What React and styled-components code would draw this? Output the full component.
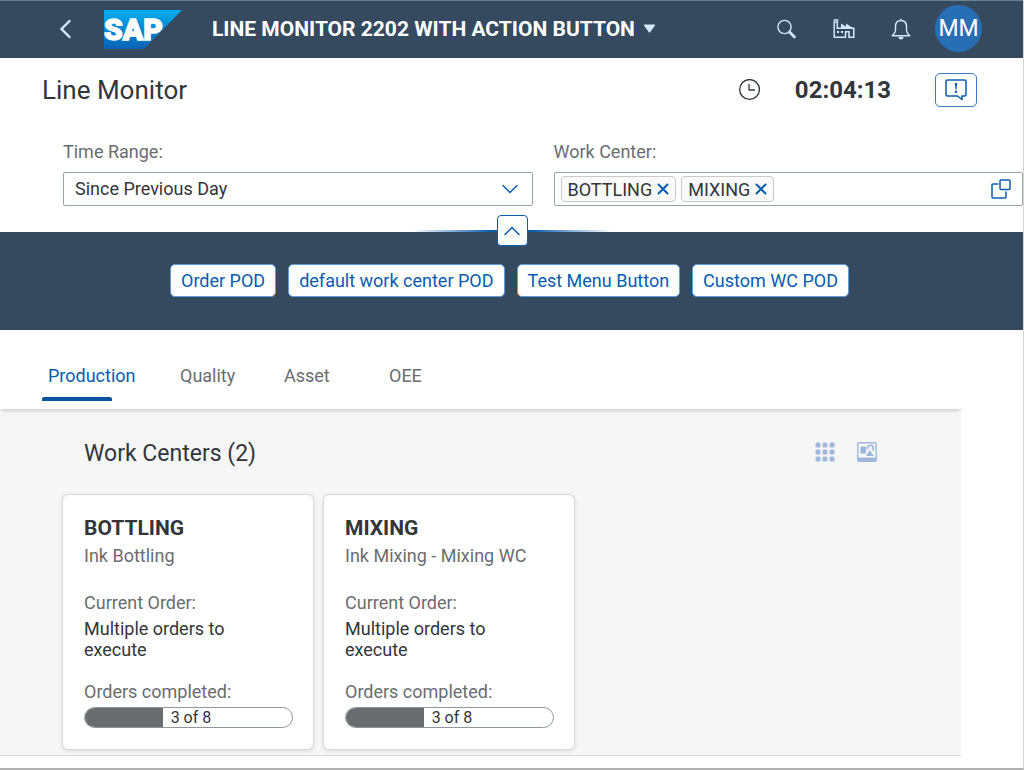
import React, { useState } from 'react'
import styled, { createGlobalStyle, css } from 'styled-components'

const GlobalStyle = createGlobalStyle`
  * {
    box-sizing: border-box;
  }
  body {
    margin: 0;
    background: #fff;
    color: #32363a;
    font-family: Roboto, "Liberation Sans", sans-serif;
    font-size: 18px;
    line-height: 21px;
  }
  button, select, input {
    font: inherit;
    color: inherit;
    margin: 0;
  }
`

const Page = styled.div`
  min-height: 100vh;
  border-right: 1px solid #d5d5d5;
  border-bottom: 2px solid #b0b0b0;
`

const plainButton = css`
  display: flex;
  align-items: center;
  justify-content: center;
  padding: 0;
  border: 0;
  background: none;
  cursor: pointer;
`

// Shell bar

const Shell = styled.header`
  display: flex;
  align-items: center;
  justify-content: space-between;
  height: 58px;
  padding: 0 41px 2px 50px;
  border-top: 1px solid #6a8093;
  background: #354a5f;
  color: #d1e8ff;
`

const ShellGroup = styled.div`
  display: flex;
  align-items: center;
  gap: ${(props) => props.$gap};
`

const ShellButton = styled.button`
  ${plainButton}
  width: ${(props) => (props.$wide ? '45px' : '30px')};
  height: 36px;
`

const LogoLink = styled.a`
  display: flex;
  margin: 2px 6px 0 0;
`

const AppTitle = styled.button`
  ${plainButton}
  gap: 8px;
  color: #fff;
  font-size: 21px;
  line-height: 24px;
  font-weight: bold;
`

const Avatar = styled.button`
  ${plainButton}
  width: 47px;
  height: 47px;
  border-radius: 50%;
  background: #286eb4;
  color: #fff;
  font-size: 23px;
`

// Page title and filters

const TitleBar = styled.div`
  display: flex;
  align-items: center;
  justify-content: space-between;
  height: 64px;
  padding: 0 46px 0 42px;
`

const PageTitle = styled.h1`
  margin: 0;
  font-size: 26px;
  line-height: 30px;
  font-weight: normal;
`

const Status = styled.div`
  display: flex;
  align-items: center;
`

const Time = styled.time`
  margin: 0 44px 0 35px;
  font-size: 24px;
  line-height: 30px;
  font-weight: bold;
`

const AlertButton = styled.button`
  ${plainButton}
  width: 42px;
  height: 34px;
  border: 1px solid #3a7bc4;
  border-radius: 5px;
  color: #0a5cb0;
`

const Filters = styled.div`
  display: grid;
  grid-template-columns: repeat(2, minmax(0, 1fr));
  gap: 21px;
  padding: 19px 0 26px 63px;
`

const Field = styled.div`
  display: flex;
  flex-direction: column;
  gap: 10px;
`

const Label = styled.label`
  color: #6a6d70;
`

const fieldBox = css`
  width: 100%;
  height: 34px;
  border: 1px solid #98a1ac;
  border-radius: 2px;
  background: #fff;
`

const SelectWrap = styled.div`
  position: relative;
  color: #0a5cb0;

  svg {
    position: absolute;
    top: 12px;
    right: 14px;
    pointer-events: none;
  }
`

const Select = styled.select`
  ${fieldBox}
  padding: 0 40px 2px 11px;
  color: #32363a;
  appearance: none;
`

const MultiInput = styled.div`
  ${fieldBox}
  display: flex;
  align-items: center;
  gap: 5px;
  padding: 0 6px;
`

const Token = styled.span`
  display: flex;
  align-items: center;
  gap: 5px;
  height: 26px;
  padding: 0 6px;
  border: 1px solid #c9c9c9;
  border-radius: 4px;
  background: #fafafa;
`

const TokenInput = styled.input`
  flex: 1;
  min-width: 0;
  border: 0;
  outline: 0;
  background: none;
`

const IconButton = styled.button`
  ${plainButton}
  width: 30px;
  height: 30px;
  color: #0a5cb0;
`

const RemoveButton = styled.button`
  ${plainButton}
  color: #0a5cb0;
`

// Action band

const ActionBand = styled.section`
  position: relative;
  display: flex;
  justify-content: center;
  gap: 12px;
  padding: 32px 4px 33px 0;
  background: #354a5f;
`

const CollapseLine = styled.span`
  position: absolute;
  top: -2px;
  left: calc(50% - 100px);
  width: 200px;
  height: 2px;
  background: linear-gradient(to right, transparent, #0a5cb0 40%, #0a5cb0 60%, transparent);
`

const CollapseButton = styled.button`
  ${plainButton}
  position: absolute;
  top: -17px;
  left: calc(50% - 15px);
  width: 31px;
  height: 31px;
  border: 1px solid #0a5cb0;
  border-radius: 4px;
  background: #fff;
  color: #0a5cb0;
`

const ActionButton = styled.button`
  height: 33px;
  padding: 0 10px;
  border: 1px solid #5a9fe0;
  border-radius: 5px;
  background: #fff;
  color: #0a5cb0;
  cursor: pointer;
`

// Tabs

const Tabs = styled.nav`
  position: relative;
  display: grid;
  grid-template-columns: 138px 104px 105px 104px;
  height: 80px;
  margin-right: 62px;
  padding: 35px 0 0 42px;
  border-bottom: 1px solid #d9d9d9;
  box-shadow: 0 3px 3px -2px rgba(0, 0, 0, 0.16);
`

const Tab = styled.button`
  display: flex;
  flex-direction: column;
  align-items: flex-start;
  gap: 11px;
  height: 36px;
  padding: 0;
  border: 0;
  background: none;
  color: ${(props) => (props.$active ? '#0a5cb0' : '#6a6d70')};
  cursor: pointer;

  span {
    padding-left: ${(props) => (props.$first ? '6px' : '0')};
  }

  &::after {
    content: "";
    width: 70px;
    height: 4px;
    border-radius: 2px 2px 0 0;
    background: ${(props) => (props.$active ? '#0854a0' : 'transparent')};
  }
`

// Work centers

const Panel = styled.main`
  margin-right: 62px;
  padding: 25px 84px 5px 62px;
  border-bottom: 1px solid #d9d9d9;
  background: #f6f6f6;
`

const PanelHead = styled.div`
  display: flex;
  align-items: center;
  justify-content: space-between;
  height: 34px;
  margin-bottom: 25px;
  padding-left: 22px;
`

const PanelTitle = styled.h2`
  margin: 0;
  padding-top: 3px;
  font-size: 23px;
  line-height: 28px;
  font-weight: normal;
`

const ViewButtons = styled.div`
  display: flex;
  gap: 22px;
`

const ViewButton = styled.button`
  ${plainButton}
  width: 20px;
  height: 20px;
  color: #9db8dc;
`

const Cards = styled.div`
  display: flex;
  flex-wrap: wrap;
  gap: 9px;
`

const Card = styled.article`
  width: 252px;
  padding: 21px 20px 21px 21px;
  border: 1px solid #d9d9d9;
  border-radius: 6px;
  background: #fff;
  box-shadow: 0 1px 4px rgba(0, 0, 0, 0.12);
`

const CardTitle = styled.h3`
  margin: 0 0 5px;
  font-size: 21px;
  line-height: 24px;
  font-weight: bold;
`

const Muted = styled.p`
  margin: 0 0 ${(props) => props.$space};
  color: #6a6d70;
`

const Value = styled.p`
  max-width: 180px;
  margin: 0 0 21px;
`

const Track = styled.div`
  display: flex;
  align-items: center;
  height: 21px;
  overflow: hidden;
  border: 1px solid #8f969d;
  border-radius: 11px;
  font-size: 16px;
  line-height: 19px;
`

const Fill = styled.div`
  height: 21px;
  margin-right: 8px;
  background: #6a6d70;
`

const LineIcon = ({ size = 20, width = 1.5, children }) => (
  <svg width={size} height={size} viewBox="0 0 20 20" fill="none" stroke="currentColor"
    strokeWidth={width} strokeLinecap="round" strokeLinejoin="round" aria-hidden="true">
    {children}
  </svg>
)

const Chevron = ({ up }) => (
  <svg width="18" height="10" viewBox="0 0 18 10" fill="none" stroke="currentColor"
    strokeWidth="1.5" strokeLinecap="round" aria-hidden="true">
    <path d={up ? 'M2 8.5 9 1.5 16 8.5' : 'M2 1.5 9 8.5 16 1.5'} />
  </svg>
)

const SapLogo = () => (
  <svg width="78" height="39" viewBox="0 0 78 39" role="img" aria-label="SAP">
    <defs>
      <linearGradient id="sap" x1="0" y1="0" x2="0" y2="1">
        <stop offset="0" stopColor="#00aeef" />
        <stop offset="1" stopColor="#0a62b5" />
      </linearGradient>
    </defs>
    <path d="M0 0H78L40 39H0Z" fill="url(#sap)" />
    <text x="0" y="30" fill="#fff" stroke="#fff" strokeWidth="1.4" fontFamily="Roboto, sans-serif"
      fontSize="30" fontWeight="900">SAP</text>
  </svg>
)

const workCenters = [
  { name: 'BOTTLING', description: 'Ink Bottling', order: 'Multiple orders to execute', done: 3, total: 8 },
  { name: 'MIXING', description: 'Ink Mixing - Mixing WC', order: 'Multiple orders to execute', done: 3, total: 8 },
]

const actions = ['Order POD', 'default work center POD', 'Test Menu Button', 'Custom WC POD']
const tabs = ['Production', 'Quality', 'Asset', 'OEE']

const ShellBar = () => (
  <Shell>
    <ShellGroup $gap="24px">
      <ShellButton aria-label="Back">
        <svg width="12" height="20" viewBox="0 0 12 20" fill="none" stroke="currentColor"
          strokeWidth="2.4" strokeLinecap="round" aria-hidden="true">
          <path d="M10.500 2 2.500 10 10.500 18" />
        </svg>
      </ShellButton>
      <LogoLink href="#home"><SapLogo /></LogoLink>
      <AppTitle>
        LINE MONITOR 2202 WITH ACTION BUTTON
        <svg width="13" height="9" viewBox="0 0 13 9" fill="#d1e8ff" aria-hidden="true">
          <path d="M1.500 0.500H11.500Q12.700 0.500 12 1.600L7.300 8Q6.500 9 5.700 8L1 1.600Q0.300 0.500 1.500 0.500Z" />
        </svg>
      </AppTitle>
    </ShellGroup>
    <ShellGroup $gap="12px">
      <ShellButton $wide aria-label="Search">
        <LineIcon width={1.4}>
          <circle cx="7.500" cy="8" r="6.600" />
          <path d="M12.500 13 17.500 18" strokeWidth="2.600" />
        </LineIcon>
      </ShellButton>
      <ShellButton $wide aria-label="Plant">
        <svg width="22" height="20" viewBox="0 0 22 20" fill="none" stroke="currentColor" strokeWidth="1.500" aria-hidden="true">
          <path d="M0.500 1H5.500M1.200 3V18.300H12.500V12.700H16V18.300H20.800V9.300H4.300V3H0.500" />
          <path d="M8 9V4.500L13 7.500V4.500L20 9Z" fill="currentColor" stroke="none" />
          <path d="M4 13H6M8 13H10" strokeWidth="2" />
        </svg>
      </ShellButton>
      <ShellButton $wide aria-label="Notifications">
        <svg width="20" height="22" viewBox="0 0 20 22" fill="none" stroke="currentColor" strokeWidth="1.400" strokeLinejoin="round" aria-hidden="true">
          <path d="M10 0.800V2.500M10 2.500C6.200 2.500 4.500 5.200 4.500 8.500V12.500C4.500 14.500 3 15.500 1.300 17.700H18.700C17 15.500 15.500 14.500 15.500 12.500V8.500C15.500 5.200 13.800 2.500 10 2.500Z" />
          <path d="M7.300 19H12.700Q12 21.500 10 21.500Q8 21.500 7.300 19Z" fill="currentColor" stroke="none" />
        </svg>
      </ShellButton>
      <Avatar aria-label="MM">MM</Avatar>
    </ShellGroup>
  </Shell>
)

const WorkCenterField = () => (
  <Field>
    <Label htmlFor="work-center">Work Center:</Label>
    <MultiInput>
      {workCenters.map((wc) => (
        <Token key={wc.name}>
          {wc.name}
          <RemoveButton aria-label={`Remove ${wc.name}`}>
            <LineIcon size={12} width={3.4}>
              <path d="M2.500 2.500 17.500 17.500M17.500 2.500 2.500 17.500" />
            </LineIcon>
          </RemoveButton>
        </Token>
      ))}
      <TokenInput id="work-center" type="text" />
      <IconButton aria-label="Open value help">
        <LineIcon width={1.5}>
          <rect x="9" y="1" width="10" height="9.500" rx="1" />
          <path d="M7 5H2Q1 5 1 6V18Q1 19 2 19H14Q15 19 15 18V13" />
        </LineIcon>
      </IconButton>
    </MultiInput>
  </Field>
)

const WorkCenterCard = ({ name, description, order, done, total }) => (
  <Card>
    <CardTitle>{name}</CardTitle>
    <Muted $space="26px">{description}</Muted>
    <Muted $space="5px">Current Order:</Muted>
    <Value>{order}</Value>
    <Muted $space="5px">Orders completed:</Muted>
    <Track role="progressbar" aria-label="Orders completed" aria-valuenow={done} aria-valuemax={total}>
      <Fill style={{ width: `${(done / total) * 100}%` }} />
      {done} of {total}
    </Track>
  </Card>
)

const App = () => {
  const [activeTab, setActiveTab] = useState('Production')

  return (
    <Page>
      <GlobalStyle />
      <ShellBar />

      <TitleBar>
        <PageTitle>Line Monitor</PageTitle>
        <Status>
          <LineIcon size={22} width={1.2}>
            <circle cx="10.500" cy="9.500" r="9" />
            <path d="M10 5V10H15" />
          </LineIcon>
          <Time>02:04:13</Time>
          <AlertButton aria-label="Alerts">
            <svg width="22" height="22" viewBox="0 0 22 22" fill="none" stroke="currentColor" strokeWidth="1.500" strokeLinejoin="round" aria-hidden="true">
              <path d="M2.500 1H19.500Q21 1 21 2.500V15.500Q21 17 19.500 17H17V20.500L12.500 17H2.500Q1 17 1 15.500V2.500Q1 1 2.500 1Z" />
              <path d="M9.800 4H12.200L11.500 10.500H10.500Z" fill="currentColor" stroke="none" />
              <circle cx="11" cy="12.800" r="1.200" fill="currentColor" stroke="none" />
            </svg>
          </AlertButton>
        </Status>
      </TitleBar>

      <Filters>
        <Field>
          <Label htmlFor="time-range">Time Range:</Label>
          <SelectWrap>
            <Select id="time-range">
              <option>Since Previous Day</option>
            </Select>
            <Chevron />
          </SelectWrap>
        </Field>
        <WorkCenterField />
      </Filters>

      <ActionBand>
        <CollapseLine />
        <CollapseButton aria-label="Collapse header">
          <Chevron up />
        </CollapseButton>
        {actions.map((action) => (
          <ActionButton key={action}>{action}</ActionButton>
        ))}
      </ActionBand>

      <Tabs>
        {tabs.map((tab, i) => (
          <Tab key={tab} $first={i === 0} $active={tab === activeTab} onClick={() => setActiveTab(tab)}>
            <span>{tab}</span>
          </Tab>
        ))}
      </Tabs>

      <Panel>
        <PanelHead>
          <PanelTitle>Work Centers (2)</PanelTitle>
          <ViewButtons>
            <ViewButton aria-label="Grid view">
              <svg width="20" height="20" viewBox="0 0 20 20" fill="currentColor" aria-hidden="true">
                {[0, 7, 14].map((y) => [0, 7, 14].map((x) => (
                  <rect key={`${x}-${y}`} x={x + 0.5} y={y + 0.5} width="5" height="5" rx="1.500" />
                )))}
              </svg>
            </ViewButton>
            <ViewButton aria-label="Picture view">
              <svg width="20" height="20" viewBox="0 0 20 20" fill="currentColor" aria-hidden="true">
                <path d="M2 0.700H18Q19.200 0.700 19.200 2V18Q19.200 19.200 18 19.200H2Q0.800 19.200 0.800 18V2Q0.800 0.700 2 0.700Z" fill="none" stroke="currentColor" strokeWidth="1.400" />
                <path d="M1 15.500H19V19H1ZM3.500 4.500H9V11.500H3.500Z" />
                <path d="M9 14 12.700 8 16.800 14Z" />
                <path d="M10.500 7A3 3 0 1 1 15.500 8.500" fill="none" stroke="currentColor" strokeWidth="1.800" />
              </svg>
            </ViewButton>
          </ViewButtons>
        </PanelHead>
        <Cards>
          {workCenters.map((wc) => (
            <WorkCenterCard key={wc.name} {...wc} />
          ))}
        </Cards>
      </Panel>
    </Page>
  )
}

export default App
